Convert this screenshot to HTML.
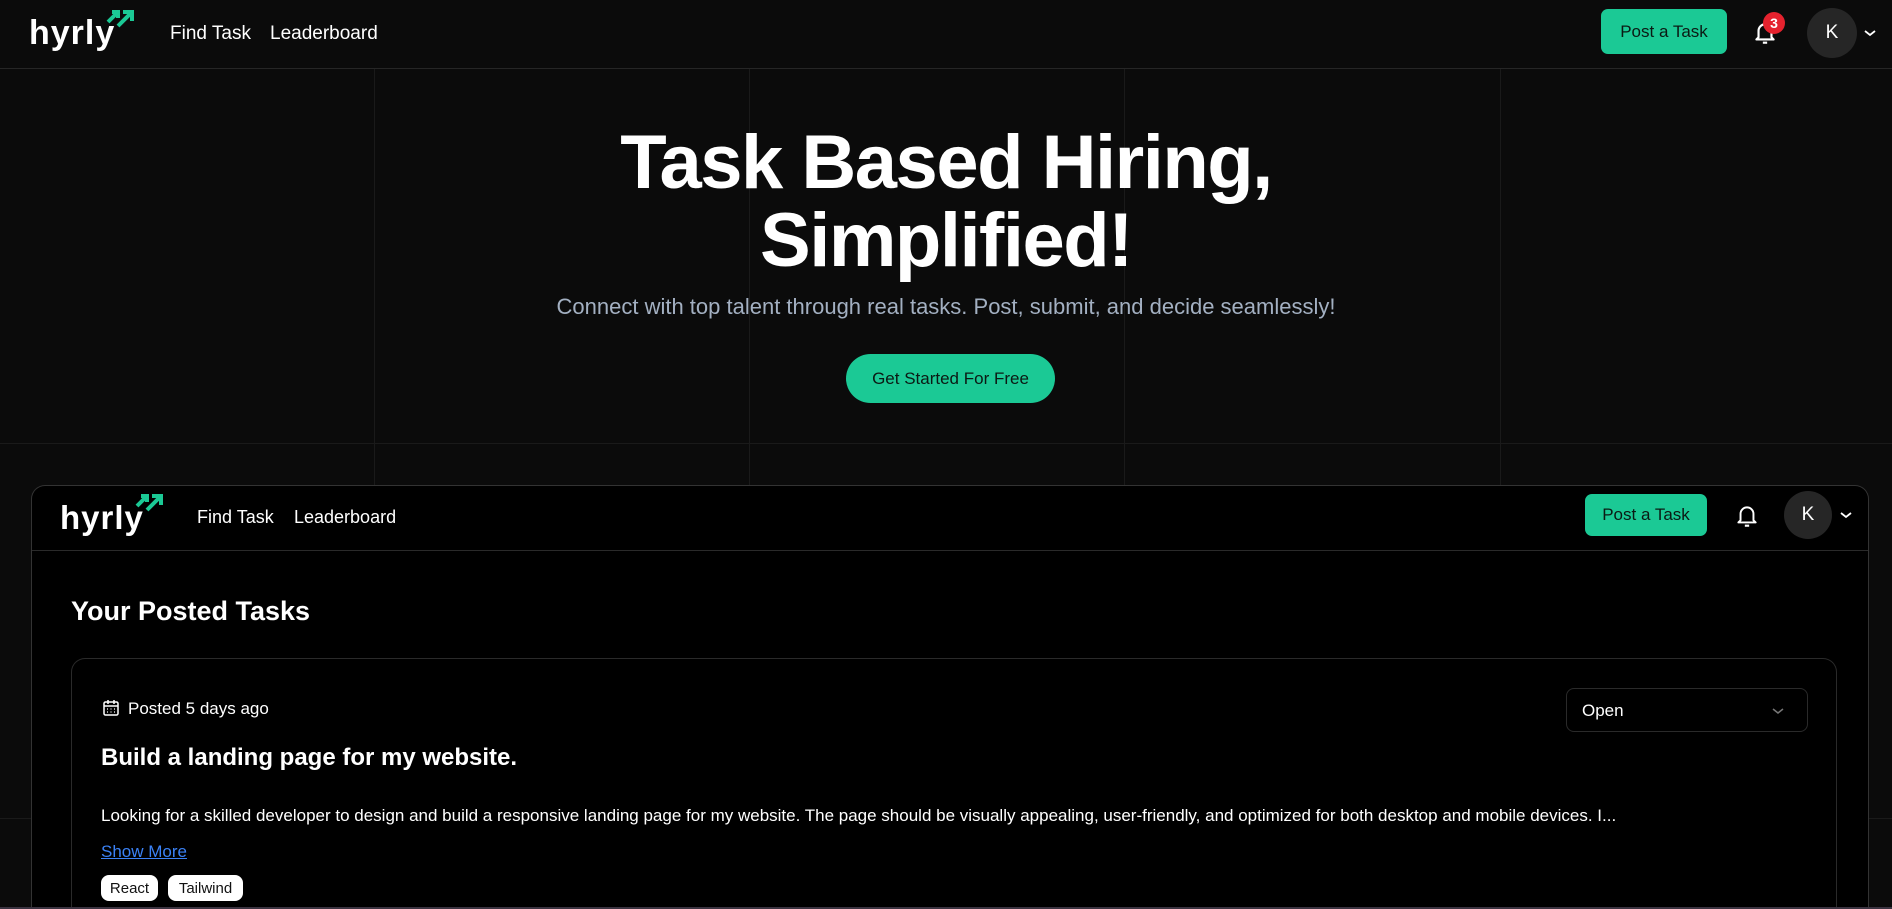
<!DOCTYPE html>
<html><head><meta charset="utf-8"><style>
*{margin:0;padding:0;box-sizing:border-box}
html,body{width:1892px;height:909px;overflow:hidden}
body{background:#0b0b0b;font-family:"Liberation Sans",sans-serif;color:#fff;position:relative}
.wrap{position:absolute;left:0;top:0;width:1892px;height:909px;overflow:hidden}
.vl{position:absolute;top:69px;bottom:0;width:1px;background:#1a1a1a}
.hl{position:absolute;left:0;right:0;height:1px;background:#1a1a1a}
.hdr{position:absolute;left:0;top:0;width:1892px;height:69px;border-bottom:1px solid #262626;background:#0b0b0b}
.logo{position:absolute;font-size:34px;font-weight:700;letter-spacing:1px;color:#fff}
.nav{position:absolute;font-size:19px;color:#fff}
.btn{position:absolute;background:#1bc995;color:#0b1a14;border-radius:7px;font-size:17px;display:flex;align-items:center;justify-content:center}
.av{position:absolute;border-radius:50%;background:#262626;color:#fff;display:flex;align-items:center;justify-content:center;font-size:19px}
h1{position:absolute;left:0;width:1892px;text-align:center;font-size:76px;line-height:78px;font-weight:700;top:124px;letter-spacing:-1.5px}
.sub{position:absolute;left:0;width:1892px;text-align:center;top:294px;font-size:22px;color:#a3b0c2}
.gs{position:absolute;left:846px;top:354px;width:209px;height:49px;border-radius:25px;background:#1bc995;color:#0b1a14;font-size:17px;display:flex;align-items:center;justify-content:center}
.frame{position:absolute;left:31px;top:485px;width:1838px;height:424px;border:1.5px solid #333;border-bottom:none;border-radius:14px 14px 0 0;background:#000;overflow:hidden}
.card{position:absolute;left:39px;top:172px;width:1766px;height:260px;border:1px solid #2a2a2a;border-bottom:none;border-radius:14px 14px 0 0}
</style></head><body><div class="wrap">
<div class="vl" style="left:374px"></div><div class="vl" style="left:749px"></div><div class="vl" style="left:1124px"></div><div class="vl" style="left:1500px"></div>
<div class="hl" style="top:443px"></div><div class="hl" style="top:818px"></div>

<div class="hdr">
 <div class="logo" style="left:29px;top:14px">hyrly</div>
 <svg style="position:absolute;left:104px;top:8px" width="32" height="26" viewBox="0 0 32 26"><path d="M4 14 L14 4 M8 4 H14 V10" stroke="#1bc995" stroke-width="4" fill="none"/><path d="M14 18 L27 5 M19 4 H28 V13" stroke="#1bc995" stroke-width="4" fill="none"/></svg>
 <div class="nav" style="left:170px;top:23px">Find Task</div>
 <div class="nav" style="left:270px;top:23px">Leaderboard</div>
 <div class="btn" style="left:1601px;top:9px;width:126px;height:45px">Post a Task</div>
 <svg style="position:absolute;left:1752px;top:19px" width="26" height="28" viewBox="0 0 24 26"><path d="M6 17V11a6 6 0 0 1 12 0v6l2 2H4z" stroke="#fff" stroke-width="2" fill="none" stroke-linejoin="round"/><path d="M10 22h4" stroke="#fff" stroke-width="2"/></svg>
 <div style="position:absolute;left:1763px;top:12px;width:22px;height:22px;border-radius:50%;background:#e5222e;color:#fff;font-size:14px;font-weight:700;display:flex;align-items:center;justify-content:center">3</div>
 <div class="av" style="left:1807px;top:8px;width:50px;height:50px">K</div>
 <svg style="position:absolute;left:1863px;top:28px" width="14" height="10" viewBox="0 0 14 10"><path d="M2 3l5 4 5-4" stroke="#fff" stroke-width="1.8" fill="none"/></svg>
</div>

<h1>Task Based Hiring,<br>Simplified!</h1>
<div class="sub">Connect with top talent through real tasks. Post, submit, and decide seamlessly!</div>
<div class="gs">Get Started For Free</div>

<div class="frame">
 <div style="position:absolute;left:0;right:0;top:0;height:65px;border-bottom:1px solid #2a2a2a"></div>
 <div class="logo" style="left:28px;top:13px;font-size:33px">hyrly</div>
 <svg style="position:absolute;left:101px;top:6px" width="32" height="26" viewBox="0 0 32 26"><path d="M4 14 L14 4 M8 4 H14 V10" stroke="#1bc995" stroke-width="4" fill="none"/><path d="M14 18 L27 5 M19 4 H28 V13" stroke="#1bc995" stroke-width="4" fill="none"/></svg>
 <div class="nav" style="left:165px;top:21px;font-size:18px">Find Task</div>
 <div class="nav" style="left:262px;top:21px;font-size:18px">Leaderboard</div>
 <div class="btn" style="left:1553px;top:8px;width:122px;height:42px">Post a Task</div>
 <svg style="position:absolute;left:1702px;top:16px" width="26" height="28" viewBox="0 0 24 26"><path d="M6 17V11a6 6 0 0 1 12 0v6l2 2H4z" stroke="#fff" stroke-width="1.8" fill="none" stroke-linejoin="round"/><path d="M10 22h4" stroke="#fff" stroke-width="2"/></svg>
 <div class="av" style="left:1752px;top:5px;width:48px;height:48px">K</div>
 <svg style="position:absolute;left:1807px;top:24px" width="14" height="10" viewBox="0 0 14 10"><path d="M2 3l5 4 5-4" stroke="#fff" stroke-width="1.8" fill="none"/></svg>

 <div style="position:absolute;left:39px;top:110px;font-size:27px;font-weight:700">Your Posted Tasks</div>
 <div class="card">
  <svg style="position:absolute;left:30px;top:40px" width="18" height="18" viewBox="0 0 18 18"><rect x="2" y="3" width="14" height="13" rx="1.5" stroke="#fff" stroke-width="1.5" fill="none"/><path d="M2 7h14M6 1v4M12 1v4" stroke="#fff" stroke-width="1.5"/><path d="M5 10h1M8.5 10h1M12 10h1M5 13h1M8.5 13h1M12 13h1" stroke="#fff" stroke-width="1.3"/></svg>
  <div style="position:absolute;left:56px;top:40px;font-size:17px">Posted 5 days ago</div>
  <div style="position:absolute;left:29px;top:85px;font-size:24px;font-weight:700">Build a landing page for my website.</div>
  <div style="position:absolute;left:29px;top:147px;font-size:17px;white-space:nowrap">Looking for a skilled developer to design and build a responsive landing page for my website. The page should be visually appealing, user-friendly, and optimized for both desktop and mobile devices. I...</div>
  <div style="position:absolute;left:29px;top:183px;font-size:17px;color:#3b82f6;text-decoration:underline">Show More</div>
  <div style="position:absolute;left:29px;top:216px;width:57px;height:26px;border-radius:8px;background:#fff;color:#111;font-size:15px;display:flex;align-items:center;justify-content:center">React</div>
  <div style="position:absolute;left:96px;top:216px;width:75px;height:26px;border-radius:8px;background:#fff;color:#111;font-size:15px;display:flex;align-items:center;justify-content:center">Tailwind</div>
  <div style="position:absolute;left:1494px;top:29px;width:242px;height:44px;border:1px solid #2a2a2a;border-radius:8px">
   <div style="position:absolute;left:15px;top:12px;font-size:17px">Open</div>
   <svg style="position:absolute;right:22px;top:17px" width="14" height="10" viewBox="0 0 14 10"><path d="M2 3l5 4 5-4" stroke="#777" stroke-width="1.5" fill="none"/></svg>
  </div>
 </div>
</div>
<div style="position:absolute;left:0;right:0;top:907px;height:2px;background:#3a3340"></div>
</div></body></html>
